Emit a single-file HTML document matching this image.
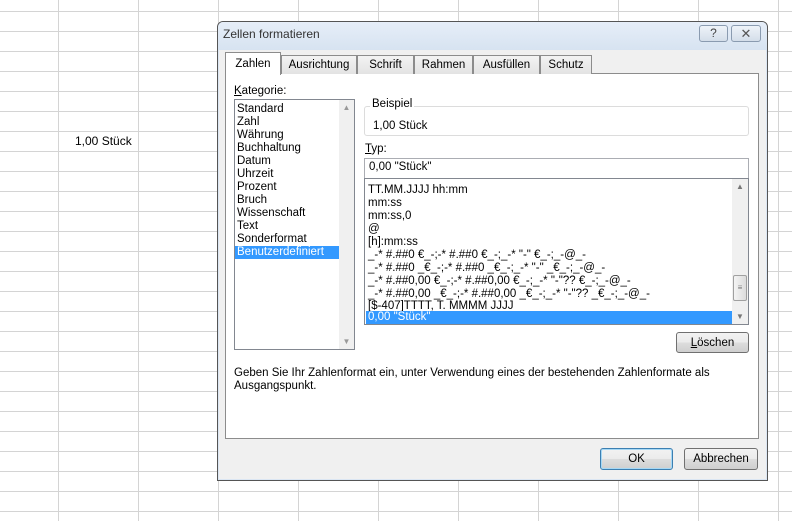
<!DOCTYPE html>
<html><head><meta charset="utf-8"><style>
*{margin:0;padding:0;box-sizing:border-box}
body{width:792px;height:521px;overflow:hidden;background:#fff;font-family:"Liberation Sans",sans-serif;font-size:11.5px;color:#000;position:relative}
.a{position:absolute}
.grid{position:absolute;left:0;top:0;width:792px;height:521px;
background-image:linear-gradient(to right,#d4d4d4 1px,transparent 1px),linear-gradient(to bottom,#d4d4d4 1px,transparent 1px);
background-size:80px 20px;background-position:58px 0,0 11px}
.btn{position:absolute;border:1px solid #707070;border-radius:3px;background:linear-gradient(#f2f2f2,#ebebeb 50%,#dddddd 51%,#cfcfcf);text-align:center;line-height:20px;font-size:11.5px}
.tab{position:absolute;top:55px;height:19px;border:1px solid #8c8c8c;border-bottom:none;background:linear-gradient(#f3f3f3,#e3e3e3);text-align:center;line-height:18px}
.l{position:absolute;left:0;white-space:pre;line-height:13px}
</style></head><body>
<div class="grid"></div>
<div class="a" style="left:75px;top:134px;font-size:12px">1,00 Stück</div>

<div class="a" style="left:217px;top:21px;width:551px;height:460px;border:1px solid #555;border-radius:6px 6px 0 0;background:#dbe6f3"></div>
<div class="a" style="left:218px;top:22px;width:549px;height:28px;border-radius:5px 5px 0 0;background:linear-gradient(#e6eef8,#d7e3f1)"></div>
<div class="a" style="left:223px;top:27px;font-size:12px;color:#333">Zellen formatieren</div>
<div class="a" style="left:699px;top:25px;width:29px;height:17px;border:1px solid #8a9bb0;border-radius:3px;background:linear-gradient(#eef3f9,#d4deea);text-align:center;font-size:12px;line-height:15px;color:#444">?</div>
<div class="a" style="left:731px;top:25px;width:30px;height:17px;border:1px solid #8a9bb0;border-radius:3px;background:linear-gradient(#eef3f9,#d4deea);text-align:center;font-size:13px;line-height:15px;color:#555">✕</div>
<div class="a" style="left:219px;top:50px;width:547px;height:429px;background:#f0f0f0"></div>

<div class="a" style="left:225px;top:73px;width:534px;height:366px;border:1px solid #8c8c8c;background:#fff"></div>
<div class="tab" style="left:281px;width:76px">Ausrichtung</div>
<div class="tab" style="left:357px;width:57px">Schrift</div>
<div class="tab" style="left:414px;width:59px">Rahmen</div>
<div class="tab" style="left:473px;width:67px">Ausfüllen</div>
<div class="tab" style="left:540px;width:52px">Schutz</div>
<div class="a" style="left:225px;top:52px;width:56px;height:23px;border:1px solid #8c8c8c;border-bottom:none;background:#fff;text-align:center;line-height:22px">Zahlen</div>

<div class="a" style="left:234px;top:85px"><u>K</u>ategorie:</div>
<div class="a" style="left:234px;top:99px;width:121px;height:251px;border:1px solid #828790;background:#fff"></div>
<div class="a" style="left:235px;top:101px;width:104px;height:248px">
 <div class="l" style="top:2px;left:2px">Standard</div>
 <div class="l" style="top:15px;left:2px">Zahl</div>
 <div class="l" style="top:28px;left:2px">Währung</div>
 <div class="l" style="top:41px;left:2px">Buchhaltung</div>
 <div class="l" style="top:54px;left:2px">Datum</div>
 <div class="l" style="top:67px;left:2px">Uhrzeit</div>
 <div class="l" style="top:80px;left:2px">Prozent</div>
 <div class="l" style="top:93px;left:2px">Bruch</div>
 <div class="l" style="top:106px;left:2px">Wissenschaft</div>
 <div class="l" style="top:119px;left:2px">Text</div>
 <div class="l" style="top:132px;left:2px">Sonderformat</div>
 <div class="l" style="top:145px;left:0;width:104px;background:#3399ff;color:#fff;padding-left:2px">Benutzerdefiniert</div>
</div>
<div class="a" style="left:339px;top:100px;width:15px;height:249px;background:#f0f0f0;color:#999;font-size:8px;text-align:center"><div style="margin-top:3px">▲</div><div style="position:absolute;bottom:3px;width:15px">▼</div></div>

<div class="a" style="left:364px;top:106px;width:385px;height:30px;border:1px solid #dcdcdc;border-radius:3px"></div>
<div class="a" style="left:370px;top:98px;background:#fff;padding:0 2px">Beispiel</div>
<div class="a" style="left:373px;top:120px">1,00 Stück</div>
<div class="a" style="left:365px;top:143px"><u>T</u>yp:</div>
<div class="a" style="left:364px;top:158px;width:385px;height:21px;border:1px solid #abadb3;background:#fff;padding:2px 4px">0,00 "Stück"</div>
<div class="a" style="left:364px;top:178px;width:385px;height:147px;border:1px solid #828790;background:#fff"></div>
<div class="a" style="left:365px;top:182px;width:367px;height:142px">
 <div class="l" style="top:2px;left:3px">TT.MM.JJJJ hh:mm</div>
 <div class="l" style="top:15px;left:3px">mm:ss</div>
 <div class="l" style="top:28px;left:3px">mm:ss,0</div>
 <div class="l" style="top:41px;left:3px">@</div>
 <div class="l" style="top:54px;left:3px">[h]:mm:ss</div>
 <div class="l" style="top:67px;left:3px">_-* #.##0 €_-;-* #.##0 €_-;_-* "-" €_-;_-@_-</div>
 <div class="l" style="top:80px;left:3px">_-* #.##0 _€_-;-* #.##0 _€_-;_-* "-" _€_-;_-@_-</div>
 <div class="l" style="top:93px;left:3px">_-* #.##0,00 €_-;-* #.##0,00 €_-;_-* "-"?? €_-;_-@_-</div>
 <div class="l" style="top:106px;left:3px">_-* #.##0,00 _€_-;-* #.##0,00 _€_-;_-* "-"?? _€_-;_-@_-</div>
 <div class="l" style="top:118px;left:3px">[$-407]TTTT, T. MMMM JJJJ</div>
 <div class="l" style="top:129px;left:1px;width:366px;height:13px;background:#3399ff;color:#fff;padding-left:2px">0,00 "Stück"</div>
</div>
<div class="a" style="left:732px;top:179px;width:16px;height:145px;background:#f0f0f0;color:#777;font-size:8px;text-align:center"><div style="margin-top:3px">▲</div><div style="position:absolute;top:96px;left:1px;width:14px;height:26px;border:1px solid #a0a0a0;border-radius:2px;background:linear-gradient(to right,#f4f4f4,#dcdcdc);line-height:24px">≡</div><div style="position:absolute;bottom:3px;width:16px">▼</div></div>

<div class="btn" style="left:676px;top:332px;width:73px;height:21px"><u>L</u>öschen</div>
<div class="a" style="left:234px;top:367px;line-height:13px">Geben Sie Ihr Zahlenformat ein, unter Verwendung eines der bestehenden Zahlenformate als<br>Ausgangspunkt.</div>

<div class="btn" style="left:600px;top:448px;width:73px;height:22px;border-color:#3c7fb1;box-shadow:inset 0 0 0 1px #a6d8f5">OK</div>
<div class="btn" style="left:684px;top:448px;width:74px;height:22px">Abbrechen</div>
</body></html>
